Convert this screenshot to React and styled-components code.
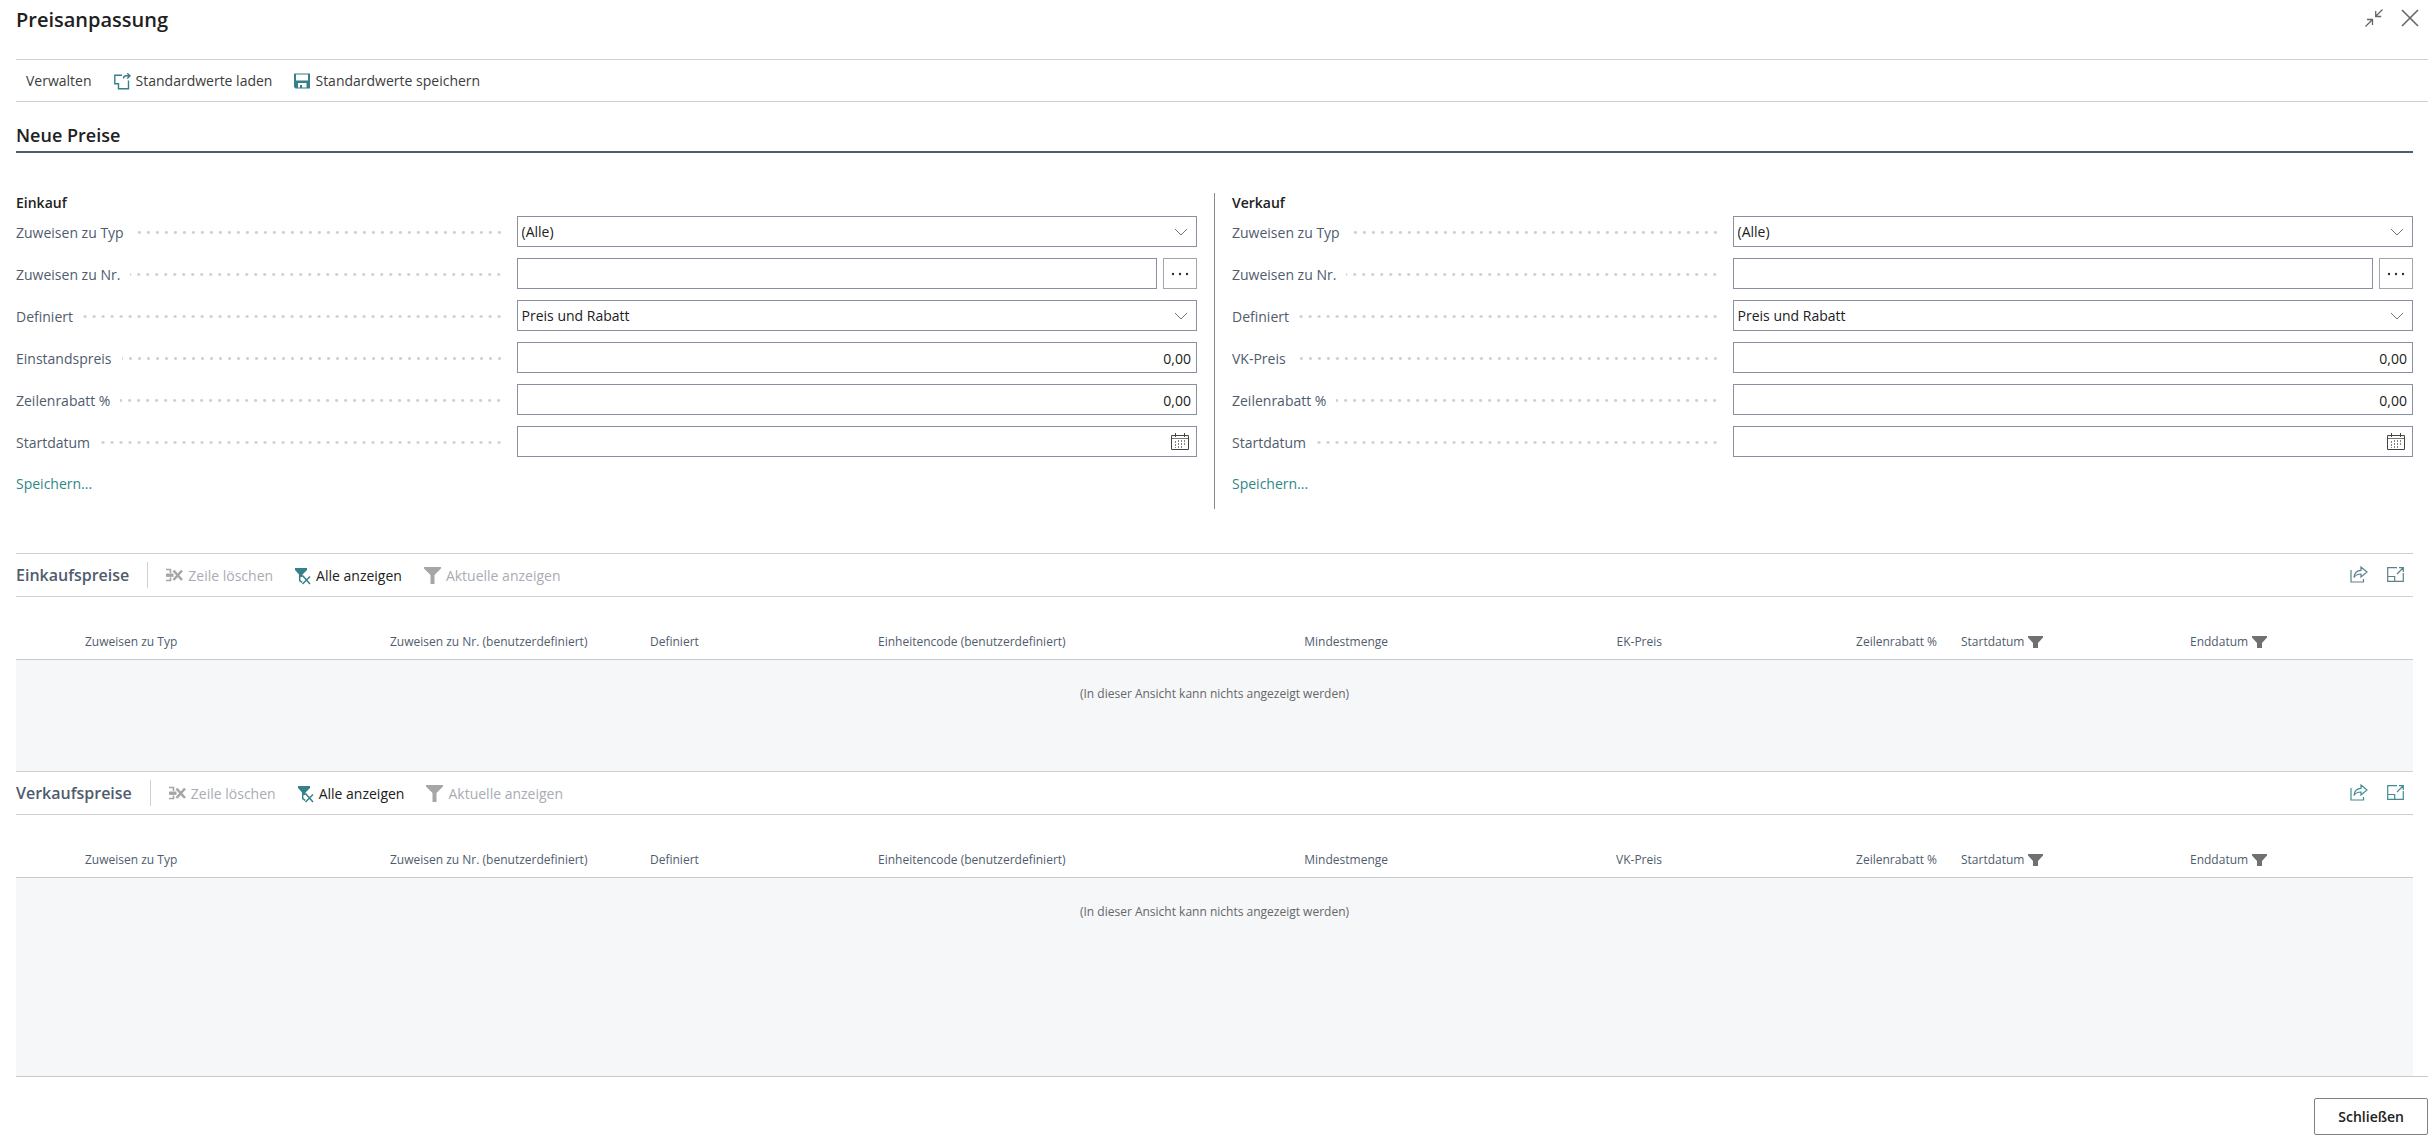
import React, { useState } from 'react';
import styled, { createGlobalStyle } from 'styled-components';

const GlobalStyle = createGlobalStyle`
    * { box-sizing: border-box; }
    body {
        margin: 0;
        background: #fff;
        color: #212121;
        font-family: "Open Sans", "Noto Sans", sans-serif;
        font-size: 14px;
        line-height: 20px;
    }
    button, input, select { font: inherit; color: inherit; }
`;

const Page = styled.main`
    display: flex;
    flex-direction: column;
    min-height: 100vh;
    padding: 0 8px 12px 16px;
`;

const TitleBar = styled.header`
    display: flex;
    justify-content: space-between;
    align-items: flex-start;
    height: 59px;
    padding: 6px 9px 0 0;
`;

const Title = styled.h1`
    margin: 0;
    font-size: 20px;
    line-height: 28px;
    font-weight: 600;
`;

const WindowButtons = styled.div`
    display: flex;
    gap: 18px;
    padding-top: 3px;
`;

const IconButton = styled.button`
    display: flex;
    align-items: center;
    justify-content: center;
    padding: 0;
    border: 0;
    background: none;
    color: ${(p) => p.$color || '#666'};
    cursor: pointer;
`;

const ActionBar = styled.nav`
    display: flex;
    align-items: center;
    gap: 22px;
    height: 43px;
    padding: 1px 0 0 10px;
    border-top: 1px solid #d0d0d0;
    border-bottom: 1px solid #d0d0d0;
`;

const Action = styled.button`
    display: flex;
    align-items: center;
    gap: 5px;
    padding: 0;
    border: 0;
    background: none;
    color: ${(p) => p.$dark ? '#212121' : '#3c3c3c'};
    cursor: pointer;

    svg { color: #35808a; }
    &:disabled { color: #a9acb3; cursor: default; }
    &:disabled svg { color: #a6a6a6; }
`;

const Content = styled.div`
    display: flex;
    flex-direction: column;
    flex: 1;
    padding-right: 15px;
`;

const SectionTitle = styled.h2`
    margin: 0;
    padding: 20px 0 3px;
    border-bottom: 2px solid #505c6d;
    font-size: 18px;
    line-height: 26px;
    font-weight: 600;
`;

const Columns = styled.div`
    display: grid;
    grid-template-columns: 1fr 1px 1fr;
    column-gap: 17px;
    margin: 40px 0 44px;
`;

const Divider = styled.div`
    background: #8a8a8a;
`;

const Group = styled.fieldset`
    display: flex;
    flex-direction: column;
    gap: 11px;
    min-width: 0;
    height: 316px;
    margin: 0;
    padding: 0;
    border: 0;
`;

const GroupTitle = styled.legend`
    height: 23px;
    padding: 0;
    font-weight: 600;
`;

const FieldRow = styled.div`
    display: grid;
    grid-template-columns: 501fr 681fr;
    align-items: center;
    height: 31px;
`;

const LabelCell = styled.div`
    display: flex;
    align-items: center;
    gap: 10px;
    padding: 2px 13px 0 0;
    color: #505c6d;
`;

const Leader = styled.span`
    flex: 1;
    height: 3px;
    background: radial-gradient(circle, #cfcfcf 1px, transparent 2px) right center / 9px 3px repeat-x;
`;

const Control = styled.div`
    display: flex;
    gap: 6px;
    height: 31px;
`;

const Frame = styled.div`
    display: flex;
    align-items: center;
    flex: 1;
    min-width: 0;
    border: 1px solid #8a90a0;
    background: #fff;
`;

const TextInput = styled.input`
    flex: 1;
    min-width: 0;
    height: 100%;
    padding: 1px 5px 0 4px;
    border: 0;
    outline: 0;
    background: none;
    text-align: ${(p) => p.$numeric ? 'right' : 'left'};
`;

const Select = styled.select`
    grid-area: 1 / 1;
    width: 100%;
    height: 100%;
    padding: 1px 4px 0;
    border: 0;
    outline: 0;
    appearance: none;
    background: none;
`;

const SelectFrame = styled(Frame)`
    display: grid;
    grid-template-rows: 100%;

    svg {
        grid-area: 1 / 1;
        justify-self: end;
        margin-right: 8px;
        pointer-events: none;
    }
`;

const DateButton = styled(IconButton)`
    padding-right: 7px;
`;

const AssistButton = styled(IconButton)`
    width: 34px;
    border: 1px solid #a6a6a6;
`;

const SaveLink = styled.a`
    line-height: 32px;
    color: #2f8686;
    text-decoration: none;
`;

const ListSection = styled.section`
    display: flex;
    flex-direction: column;
    flex: ${(p) => p.$grow ? '1' : 'none'};
`;

const ListBar = styled.div`
    display: flex;
    align-items: center;
    height: 44px;
    padding-right: 9px;
    border-top: 1px solid #d0d0d0;
    border-bottom: 1px solid #d0d0d0;
`;

const ListTitle = styled.h3`
    margin: 0;
    padding-right: 18px;
    border-right: 1px solid #d0d0d0;
    font-size: 16px;
    line-height: 26px;
    font-weight: 600;
    color: #505c6d;
`;

const ListActions = styled.div`
    display: flex;
    align-items: center;
    flex: 1;
    gap: 22px;
    padding: 1px 0 0 18px;
`;

const ListIcons = styled.div`
    display: flex;
    gap: 19px;
    padding-bottom: 2px;
`;

const Table = styled.table`
    width: 100%;
    margin-top: 27px;
    border-spacing: 0;
    table-layout: fixed;
    font-size: 12px;
    line-height: 18px;
    color: #505c6d;
`;

const HeadCell = styled.th`
    height: 36px;
    padding: 0 12px;
    border-bottom: 1px solid #c8cacd;
    font-weight: 400;
    text-align: ${(p) => p.$right ? 'right' : 'left'};
    white-space: nowrap;

    svg {
        margin-left: 4px;
        vertical-align: -2px;
        color: #707070;
    }
`;

const EmptyArea = styled.div`
    flex: ${(p) => p.$grow ? '1' : 'none'};
    min-height: 111px;
    padding-top: 25px;
    background: #f5f7f9;
    font-size: 12px;
    line-height: 18px;
    color: #666;
    text-align: center;
`;

const Footer = styled.footer`
    display: flex;
    justify-content: flex-end;
    padding-top: 21px;
    border-top: 1px solid #c8cacd;
`;

const CloseButton = styled.button`
    height: 37px;
    padding: 0 23px;
    border: 1px solid #808080;
    border-radius: 2px;
    background: #fff;
    font-weight: 600;
    cursor: pointer;
`;

const Svg = ({ w = 18, h = w, children, ...rest }) => (
    <svg width={w} height={h} viewBox={`0 0 ${w} ${h}`} fill="none" stroke="currentColor" aria-hidden="true" {...rest}>
        {children}
    </svg>
);

const CollapseIcon = () => (
    <Svg strokeWidth="1.3">
        <path d="M17.5.5 11 7M10.7 2v5.5h5.5M.5 17.5 7 11M2 10.5h5.5V16" />
    </Svg>
);

const CloseIcon = () => (
    <Svg strokeWidth="1.6">
        <path d="M1 1l16 16M17 1 1 17" />
    </Svg>
);

const LoadIcon = () => (
    <Svg w={17} strokeWidth="1.4">
        <path d="M8 2.2H.8v8.6h3.7v4.9h10V7.500M9.500 5.500c0-1.800 1.200-2.700 3-2.700H16M13.200.3 16 2.800l-2.800 2.700" />
    </Svg>
);

const SaveIcon = () => (
    <Svg w={16} stroke="none">
        <path fill="currentColor" fillRule="evenodd" d="M0 .5h16v15H1.500L0 14zM2 1.500v6h12v-6zM4 10v4.500h2V12h2v2.500h4.500V10z" />
    </Svg>
);

const ChevronIcon = () => (
    <Svg w={14} h={8} stroke="#777">
        <path d="M1 1l6 6 6-6" />
    </Svg>
);

const DotsIcon = () => (
    <Svg w={18} h={4} stroke="none">
        <g fill="#333">
            <circle cx="2" cy="2" r="1.2" />
            <circle cx="9" cy="2" r="1.2" />
            <circle cx="16" cy="2" r="1.2" />
        </g>
    </Svg>
);

const CalendarIcon = () => (
    <Svg w={18} h={17} stroke="#444">
        <path d="M.5 2.5h17v14H.5zM4.5 0v4M13.5 0v4" />
        <path stroke="#777" d="M1 5.5h16" />
        <path stroke="#8a8078" strokeDasharray="2 1" d="M4.500 8v7M7.500 7v8M10.500 7v8M13.500 7v6" />
    </Svg>
);

const DeleteRowIcon = () => (
    <Svg w={17}>
        <path strokeWidth="1.6" d="M0 2.500h4.500v3.500M0 13.500h4.500v-3" />
        <path strokeWidth="3.400" d="M0 8.200h7.500" />
        <path strokeWidth="2.600" d="M7.500 3.500l8.500 9.500M16 3.500 7.500 13" />
    </Svg>
);

const FilterIcon = () => (
    <Svg w={17} stroke="none">
        <path fill="currentColor" d="M0 0h17v1.500L10.500 8v9h-4V8L0 1.500z" />
    </Svg>
);

const ClearFilterIcon = () => (
    <Svg w={16} h={18}>
        <path fill="currentColor" stroke="none" d="M0 1h12v2L7.500 7.500V10H4V7.500L0 3z" />
        <path strokeWidth="1.5" d="M4.700 9v4.500l2.500 1.800M7.500 8.500l7.500 8.500M15 9.500 7.500 17" />
    </Svg>
);

const SmallFilterIcon = () => (
    <Svg w={15} h={12} stroke="none">
        <path fill="currentColor" d="M0 0h15v1.500L10 7v5H5V7L0 1.500z" />
    </Svg>
);

const ShareIcon = () => (
    <Svg w={18} h={17} strokeWidth="1.2">
        <path d="M1 4v12h12.500v-3M4 11.500c.5-5 3-7.200 7-7.200V1l6 5-6 5V8c-3.500 0-5.500 1-7 3.500z" />
    </Svg>
);

const ExpandIcon = () => (
    <Svg w={17} h={15} strokeWidth="1.2">
        <path d="M10 .7H.7v13.600h15.600V6M.7 9.500h7v4.800M10 7l6-6M12 .7h4.300V5" />
    </Svg>
);

const columns = [
    { width: 57, text: '' },
    { width: 305, text: 'Zuweisen zu Typ' },
    { width: 260, text: 'Zuweisen zu Nr. (benutzerdefiniert)' },
    { width: 228, text: 'Definiert' },
    { width: 260, text: 'Einheitencode (benutzerdefiniert)' },
    { width: 274, text: 'Mindestmenge', right: true },
    { width: 274, text: '', right: true, price: true },
    { width: 275, text: 'Zeilenrabatt %', right: true },
    { width: 229, text: 'Startdatum', filter: true },
    { width: 235, text: 'Enddatum', filter: true },
];

function Field({ id, label, type }) {
    const [value, setValue] = useState(type === 'number' ? '0,00' : '');
    const onChange = (e) => setValue(e.target.value);

    return (
        <FieldRow>
            <LabelCell>
                <label htmlFor={id}>{label}</label>
                <Leader />
            </LabelCell>
            <Control>
                <Frame>
                    <TextInput id={id} type="text" value={value} onChange={onChange} $numeric={type === 'number'} />
                    {type === 'date' && <DateButton aria-label="Datum auswählen"><CalendarIcon /></DateButton>}
                </Frame>
                {type === 'lookup' && <AssistButton aria-label="Wert auswählen"><DotsIcon /></AssistButton>}
            </Control>
        </FieldRow>
    );
}

function SelectField({ id, label, options }) {
    return (
        <FieldRow>
            <LabelCell>
                <label htmlFor={id}>{label}</label>
                <Leader />
            </LabelCell>
            <Control>
                <SelectFrame>
                    <Select id={id}>
                        {options.map((o) => <option key={o}>{o}</option>)}
                    </Select>
                    <ChevronIcon />
                </SelectFrame>
            </Control>
        </FieldRow>
    );
}

function PriceGroup({ id, title, priceLabel }) {
    return (
        <Group>
            <GroupTitle>{title}</GroupTitle>
            <SelectField id={id + '-typ'} label="Zuweisen zu Typ" options={['(Alle)']} />
            <Field id={id + '-nr'} label="Zuweisen zu Nr." type="lookup" />
            <SelectField id={id + '-definiert'} label="Definiert" options={['Preis und Rabatt']} />
            <Field id={id + '-preis'} label={priceLabel} type="number" />
            <Field id={id + '-rabatt'} label="Zeilenrabatt %" type="number" />
            <Field id={id + '-start'} label="Startdatum" type="date" />
            <SaveLink href="#">Speichern...</SaveLink>
        </Group>
    );
}

function PriceList({ title, priceLabel, grow, iconColor }) {
    return (
        <ListSection $grow={grow}>
            <ListBar>
                <ListTitle>{title}</ListTitle>
                <ListActions>
                    <Action disabled><DeleteRowIcon />Zeile löschen</Action>
                    <Action $dark><ClearFilterIcon />Alle anzeigen</Action>
                    <Action disabled><FilterIcon />Aktuelle anzeigen</Action>
                </ListActions>
                <ListIcons>
                    <IconButton $color={iconColor} aria-label="Teilen"><ShareIcon /></IconButton>
                    <IconButton $color={iconColor} aria-label="Erweitern"><ExpandIcon /></IconButton>
                </ListIcons>
            </ListBar>
            <Table>
                <colgroup>
                    {columns.map((c, i) => <col key={i} width={c.width} />)}
                </colgroup>
                <thead>
                    <tr>
                        {columns.map((c, i) => (
                            <HeadCell key={i} $right={c.right}>
                                {c.price ? priceLabel : c.text}
                                {c.filter && <SmallFilterIcon />}
                            </HeadCell>
                        ))}
                    </tr>
                </thead>
            </Table>
            <EmptyArea $grow={grow}>(In dieser Ansicht kann nichts angezeigt werden)</EmptyArea>
        </ListSection>
    );
}

function App() {
    return (
        <>
            <GlobalStyle />
            <Page>
                <TitleBar>
                    <Title>Preisanpassung</Title>
                    <WindowButtons>
                        <IconButton aria-label="Verkleinern"><CollapseIcon /></IconButton>
                        <IconButton aria-label="Fenster schließen"><CloseIcon /></IconButton>
                    </WindowButtons>
                </TitleBar>
                <ActionBar>
                    <Action>Verwalten</Action>
                    <Action><LoadIcon />Standardwerte laden</Action>
                    <Action><SaveIcon />Standardwerte speichern</Action>
                </ActionBar>
                <Content>
                    <SectionTitle>Neue Preise</SectionTitle>
                    <Columns>
                        <PriceGroup id="einkauf" title="Einkauf" priceLabel="Einstandspreis" />
                        <Divider />
                        <PriceGroup id="verkauf" title="Verkauf" priceLabel="VK-Preis" />
                    </Columns>
                    <PriceList title="Einkaufspreise" priceLabel="EK-Preis" iconColor="#5c7f8a" />
                    <PriceList title="Verkaufspreise" priceLabel="VK-Preis" iconColor="#3f8c92" grow />
                </Content>
                <Footer>
                    <CloseButton>Schließen</CloseButton>
                </Footer>
            </Page>
        </>
    );
}

export default App;
